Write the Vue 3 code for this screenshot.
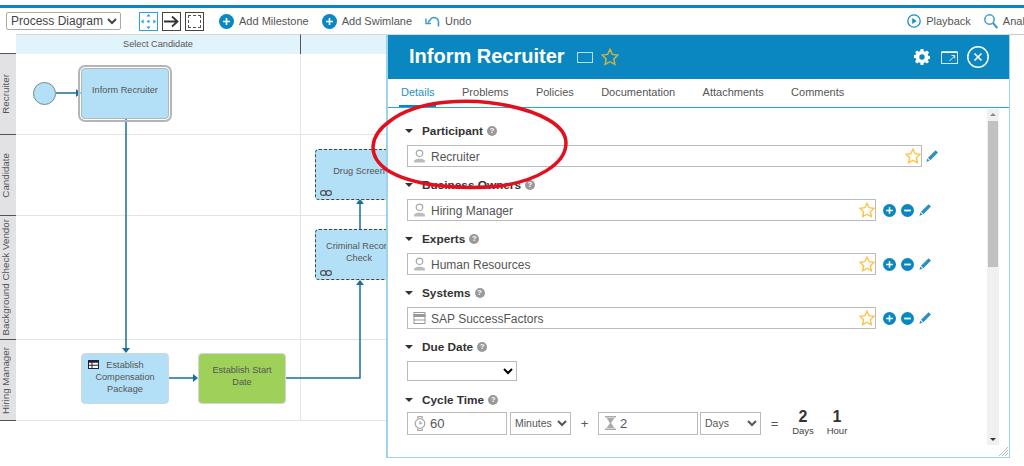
<script setup>
const lanes = [
  { name: 'Recruiter', h: 81 },
  { name: 'Candidate', h: 81 },
  { name: 'Background Check Vendor', h: 124 },
  { name: 'Hiring Manager', h: 81 },
]
const tabs = ['Details', 'Problems', 'Policies', 'Documentation', 'Attachments', 'Comments']
const people = [
  { label: 'Participant', value: 'Recruiter', icon: 'person', multi: false },
  { label: 'Business Owners', value: 'Hiring Manager', icon: 'person', multi: true },
  { label: 'Experts', value: 'Human Resources', icon: 'person', multi: true },
  { label: 'Systems', value: 'SAP SuccessFactors', icon: 'system', multi: true },
]
const starPath = 'M8 1.2l2.1 4.5 4.9.6-3.6 3.4.9 4.9L8 12.2l-4.3 2.4.9-4.9L1 6.3l4.9-.6z'
const penPath = 'M10.6 1.2l2.4 2.4-7.6 7.6-2.4-2.4zM2.4 9.6l2.2 2.2-3.2 1z'
</script>

<template>
  <div class="page">
    <div class="topline"></div>
    <div class="toolbar">
      <select class="view-select"><option>Process Diagram</option></select>
      <div class="modes">
        <span class="mode active">
          <svg width="15" height="15" viewBox="0 0 15 15" fill="#1a9bd2"><path d="M7.5 0l2 2.6h-4zM7.5 15l-2-2.6h4zM0 7.5l2.6-2v4zM15 7.5l-2.6 2v-4z"/><circle cx="7.5" cy="7.5" r="1.2"/></svg>
        </span>
        <span class="mode">
          <svg width="15" height="13" viewBox="0 0 15 13" fill="none" stroke="#333" stroke-width="1.8"><path d="M0 6.5h13M8 1.5l5.500 5-5.500 5"/></svg>
        </span>
        <span class="mode"><span class="dashed-box"></span></span>
      </div>
      <span class="tool first">
        <svg class="plus" width="15" height="15" viewBox="0 0 15 15"><circle cx="7.500" cy="7.500" r="7.500" fill="#0a87c0"/><path d="M7.500 4v7M4 7.500h7" stroke="#fff" stroke-width="1.600"/></svg>
        Add Milestone
      </span>
      <span class="tool">
        <svg class="plus" width="15" height="15" viewBox="0 0 15 15"><circle cx="7.500" cy="7.500" r="7.500" fill="#0a87c0"/><path d="M7.500 4v7M4 7.500h7" stroke="#fff" stroke-width="1.600"/></svg>
        Add Swimlane
      </span>
      <span class="tool">
        <svg width="15" height="12" viewBox="0 0 15 12" fill="none" stroke="#3d9bcb" stroke-width="1.600"><path d="M13.500 11.500V7a4.500 4.500 0 0 0-8.500-2L3 7.500"/><path d="M1 3.500v5h5" stroke-width="1.400"/></svg>
        Undo
      </span>
      <span class="spacer"></span>
      <span class="tool">
        <svg width="14" height="14" viewBox="0 0 14 14"><circle cx="7" cy="7" r="6.200" fill="none" stroke="#1a8fc4" stroke-width="1.300"/><path d="M5.200 4l4.600 3-4.600 3z" fill="#1a8fc4"/></svg>
        Playback
      </span>
      <span class="tool analyze">
        <svg width="14" height="15" viewBox="0 0 14 15" fill="none" stroke="#3d9bcb" stroke-width="1.500"><circle cx="5.500" cy="5.500" r="4.700"/><path d="M9 9l4.300 5" stroke-width="2"/></svg>
        Analyze
      </span>
    </div>

    <div class="diagram">
      <div class="lane-head">
        <div class="corner"></div>
        <div class="col-title first-col">Select Candidate</div>
        <div class="col-title">Background Check</div>
      </div>
      <div v-for="lane in lanes" :key="lane.name" class="lane" :style="{ height: lane.h + 'px' }">
        <div class="lane-label"><span>{{ lane.name }}</span></div>
        <div class="lane-cell first-col"></div>
        <div class="lane-cell"></div>
      </div>

      <svg class="wires" width="420" height="420" viewBox="0 0 420 420" fill="none" stroke="#1a6f97" stroke-width="1.500">
        <path d="M56 59H78"/>
        <path d="M126 85V316"/>
        <path d="M169 344H194"/>
        <path d="M286 344H360V250"/>
        <path d="M360 195V168"/>
        <g fill="#1a6f97" stroke="none">
          <path d="M81 59l-5-4v8z"/>
          <path d="M126 319l-4-5h8z"/>
          <path d="M198 344l-5-4v8z"/>
          <path d="M360 246l-4 5h8z"/>
          <path d="M360 165l-4 5h8z"/>
        </g>
      </svg>

      <div class="start"></div>
      <div class="node selected">Inform Recruiter</div>
      <div class="node comp">
        <svg class="table-ico" width="11" height="9" viewBox="0 0 11 9"><rect x=".5" y=".5" width="10" height="8" fill="#fff" stroke="#223"/><path d="M0 1h11v1.800H0zM3.500 1h1v8h-1zM0 4.800h11v1H0z" fill="#223"/></svg>
        Establish<br>Compensation<br>Package
      </div>
      <div class="node green">Establish Start<br>Date</div>
      <div class="node linked drug">Drug Screen
        <svg class="link-ico" width="12" height="6" viewBox="0 0 12 6" fill="none" stroke="#555" stroke-width="1.200"><rect x=".6" y=".6" width="5.500" height="4.800" rx="2.400"/><rect x="5.900" y=".6" width="5.500" height="4.800" rx="2.400"/></svg>
      </div>
      <div class="node linked crim">Criminal Record<br>Check
        <svg class="link-ico" width="12" height="6" viewBox="0 0 12 6" fill="none" stroke="#555" stroke-width="1.200"><rect x=".6" y=".6" width="5.500" height="4.800" rx="2.400"/><rect x="5.900" y=".6" width="5.500" height="4.800" rx="2.400"/></svg>
      </div>
    </div>

    <section class="panel">
      <header class="panel-head">
        <h1>Inform Recruiter</h1>
        <span class="rect-ico"></span>
        <svg width="18" height="18" viewBox="0 0 16 16" fill="none" stroke="#d6b13a" stroke-width="1.300"><path :d="starPath"/></svg>
        <span class="spacer"></span>
        <svg class="gear" width="16" height="16" viewBox="0 0 16 16"><path fill="#fff" fill-rule="evenodd" d="M6.600 0h2.800l.4 2.200 1.300.6L13 1.500l2 2-1.300 1.900.5 1.300 2.300.4v2.800l-2.300.4-.5 1.300L15 12.500l-2 2-1.900-1.300-1.300.6-.4 2.200H6.600l-.4-2.200-1.300-.6L3 14.500l-2-2 1.300-1.900-.5-1.300L0 8.900V6.100l1.800-.4.500-1.300L1 3.500l2-2 1.900 1.300 1.300-.6zM8 5.300a2.700 2.700 0 1 0 0 5.400 2.700 2.700 0 0 0 0-5.400z"/></svg>
        <svg class="pop" width="17" height="13" viewBox="0 0 17 13" fill="none" stroke="#fff"><rect x=".5" y="1" width="16" height="11.500" stroke="#cfe9f5"/><path d="M1 1.200h15" stroke-width="1.600"/><path d="M8.500 10l5-5M10.500 4.500h3.200v3" stroke-width=".9"/></svg>
        <svg class="close" width="22" height="22" viewBox="0 0 22 22" fill="none" stroke="#fff" stroke-width="1.500"><circle cx="11" cy="11" r="10.200"/><path d="M7.500 7.500l7 7M14.500 7.500l-7 7" stroke-width="1.700"/></svg>
      </header>
      <nav class="tabs">
        <a v-for="(tab, i) in tabs" :key="tab" :class="{ on: i === 0 }">{{ tab }}</a>
      </nav>
      <div class="panel-body">
        <div class="form">
          <div v-for="p in people" :key="p.label" class="section">
            <div class="sec-head">
              <i class="caret"></i><b>{{ p.label }}</b><i class="help">?</i>
            </div>
            <div class="field-row">
              <div class="field" :class="{ wide: !p.multi }">
                <svg v-if="p.icon === 'person'" width="13" height="14" viewBox="0 0 12 13" fill="none" stroke="#aaa" stroke-width="1.200"><circle cx="6" cy="4" r="3"/><path d="M1 12.500V10.500l3-1.500h4l3 1.500v2z" fill="#bbb" stroke="none"/></svg>
                <svg v-else width="13" height="12" viewBox="0 0 12 12" fill="none" stroke="#999"><rect x=".5" y=".5" width="11" height="11" fill="#fff"/><path d="M0 3.500h12" stroke-width="3"/><path d="M0 8h12"/></svg>
                <span class="val">{{ p.value }}</span>
                <svg class="star" width="16" height="16" viewBox="0 0 16 16" fill="#fff" stroke="#fcc24a" stroke-width="1.400"><path :d="starPath"/></svg>
              </div>
              <template v-if="p.multi">
                <svg class="act" width="13" height="13" viewBox="0 0 13 13"><circle cx="6.500" cy="6.500" r="6.500" fill="#0a87c0"/><path d="M6.500 3.200v6.600M3.200 6.500h6.600" stroke="#fff" stroke-width="1.500"/></svg>
                <svg class="act" width="13" height="13" viewBox="0 0 13 13"><circle cx="6.500" cy="6.500" r="6.500" fill="#0a87c0"/><path d="M3.200 6.500h6.600" stroke="#fff" stroke-width="1.800"/></svg>
              </template>
              <svg class="pen" width="14" height="14" viewBox="0 0 14 14" fill="#2a8fc7"><path :d="penPath"/></svg>
            </div>
          </div>

          <div class="section due">
            <div class="sec-head"><i class="caret"></i><b>Due Date</b><i class="help">?</i></div>
            <select class="due-select"><option></option></select>
          </div>

          <div class="section cycle">
            <div class="sec-head"><i class="caret"></i><b>Cycle Time</b><i class="help">?</i></div>
            <div class="cycle-row">
              <div class="num">
                <svg width="12" height="15" viewBox="0 0 12 15" fill="none" stroke="#aaa" stroke-width="1.300"><circle cx="6" cy="7.500" r="4.800"/><path d="M3.500 2.500l.5-2h4l.5 2M3.500 12.500l.5 2h4l.5-2M6 5v2.500h2"/></svg>
                <span>60</span>
              </div>
              <select class="unit u1"><option>Minutes</option></select>
              <span class="op plus-op">+</span>
              <div class="num">
                <svg width="11" height="14" viewBox="0 0 11 14" fill="#aaa"><path d="M0 0h11v1.500H0zM0 12.500h11V14H0zM1.500 2h8L6 7l3.500 5h-8L5 7z"/></svg>
                <span>2</span>
              </div>
              <select class="unit u2"><option>Days</option></select>
              <span class="op eq-op">=</span>
              <div class="total"><b>2</b><small>Days</small></div>
              <div class="total t2"><b>1</b><small>Hour</small></div>
            </div>
          </div>
        </div>
        <div class="scroll">
          <i class="arrow-up"></i>
          <div class="thumb"></div>
          <i class="arrow-down"></i>
        </div>
      </div>
      <svg class="grip" width="11" height="11" viewBox="0 0 11 11" stroke="#bbb" fill="none"><path d="M1 10L10 1M4 10l6-6M7 10l3-3"/></svg>
    </section>

    <div class="side-edge"></div>

    <svg class="ring" width="1024" height="466" viewBox="0 0 1024 466" fill="none" stroke="#e2101e" stroke-width="3.500">
      <path d="M510 106C470 97 417 100 390 121C369 136 367 156 387 170C412 186 460 190 500 186C535 181 566 165 566 143C566 125 540 112 505 105"/>
    </svg>
  </div>
</template>

<style>
html, body { margin: 0; background: #fff; }
</style>

<style scoped>
.page {
  position: relative;
  width: 1024px;
  height: 466px;
  overflow: hidden;
  background: #fff;
  font-family: "Liberation Sans", Arial, sans-serif;
  color: #555;
}
.topline {
  margin-top: 5px;
  height: 3px;
  background: #0a87c0;
}
.toolbar {
  display: flex;
  align-items: center;
  height: 26px;
  padding-left: 6px;
  font-size: 11px;
  color: #555;
}
.view-select {
  width: 115px;
  height: 18px;
  padding: 0;
  font: 12px "Liberation Sans", Arial, sans-serif;
  color: #444;
  background: #fff;
  border: 1px solid #aaa;
  border-radius: 2px;
}
.modes {
  display: flex;
  gap: 4px;
  margin-left: 18px;
}
.mode {
  display: flex;
  align-items: center;
  justify-content: center;
  width: 17px;
  height: 17px;
  border: 1px solid #444;
}
.mode.active { border-color: #29a3d9; }
.dashed-box {
  width: 11px;
  height: 11px;
  border: 1px dashed #555;
}
.tool {
  display: inline-flex;
  align-items: center;
  gap: 5px;
  margin-right: 13px;
  white-space: nowrap;
}
.tool.first { margin-left: 15px; }
.analyze { margin-right: -18px; }
.spacer { flex: 1; }

.diagram {
  position: relative;
  width: 1010px;
  font-size: 9.200px;
  color: #555;
}
.lane-head {
  display: flex;
  height: 20px;
}
.corner {
  width: 16px;
  flex: none;
  border-bottom: 1px solid #555;
  box-sizing: border-box;
}
.col-title {
  flex: 1;
  background: #e1f3fb;
  text-align: center;
  line-height: 18px;
  border-top: 1px solid #d8d8d8;
  box-sizing: border-box;
}
.col-title.first-col {
  flex: none;
  width: 285px;
  border-right: 1px solid #555;
}
.lane {
  display: flex;
  box-sizing: border-box;
  border-bottom: 1px solid #e4e4e4;
}
.lane-label {
  display: flex;
  align-items: center;
  justify-content: flex-start;
  flex: none;
  width: 16px;
  font-size: 9.800px;
  background: #e2e2e4;
  box-shadow: 0 1px 0 #555;
  overflow: hidden;
}
.lane-label span {
  writing-mode: vertical-rl;
  transform: rotate(180deg);
  white-space: nowrap;
  color: #555;
}
.lane-cell { flex: 1; }
.lane-cell.first-col {
  flex: none;
  width: 285px;
  border-right: 1.500px solid #e4e4e4;
  box-sizing: border-box;
}
.wires {
  position: absolute;
  left: 0;
  top: 0;
}
.start {
  position: absolute;
  left: 33px;
  top: 48px;
  box-sizing: border-box;
  width: 23px;
  height: 23px;
  border-radius: 50%;
  background: #b3e0f7;
  border: 1.500px solid #6f8a99;
}
.node {
  position: absolute;
  box-sizing: border-box;
  width: 88px;
  height: 51px;
  display: flex;
  align-items: center;
  justify-content: center;
  text-align: center;
  line-height: 12px;
  background: #b3e0f7;
  border: 1px solid #d0d8dc;
  border-radius: 4px;
  color: #555;
}
.selected {
  left: 81px;
  top: 34px;
  padding-bottom: 7px;
  outline: 2px solid #b5b5b5;
  outline-offset: 1px;
  border-color: #aeb8bd;
}
.comp { left: 81px; top: 319px; padding-bottom: 3px; }
.green { left: 198px; top: 319px; background: #9fd15a; padding-bottom: 5px; }
.linked {
  border: 1px dashed #444;
  left: 315px;
  padding-bottom: 7px;
}
.drug { top: 115px; height: 51px; }
.crim { top: 195px; height: 51px; padding-bottom: 6px; }
.table-ico { position: absolute; left: 6px; top: 6px; }
.link-ico { position: absolute; left: 4px; bottom: 3px; }

.panel {
  position: absolute;
  left: 386px;
  top: 35px;
  box-sizing: border-box;
  width: 624px;
  height: 423px;
  display: flex;
  flex-direction: column;
  background: #fff;
  border: 1px solid #9fd3ea;
  border-left-width: 2px;
  border-top: 0;
}
.panel-head {
  display: flex;
  align-items: center;
  height: 44px;
  flex: none;
  padding: 0 20px 0 21px;
  background: #0a87c0;
  color: #fff;
}
.panel-head h1 {
  margin: 0 12px 2px 0;
  font-size: 20px;
  font-weight: 700;
}
.rect-ico {
  width: 14px;
  height: 9px;
  margin-right: 8px;
  border: 1px solid #b9dfef;
}
.gear { margin-right: -1px; }
.pop { margin-left: 12px; margin-right: -1px; }
.close { margin-left: 10px; }
.tabs {
  display: flex;
  gap: 27.400px;
  height: 29px;
  flex: none;
  box-sizing: border-box;
  padding: 0 0 0 13px;
  border-bottom: 1px solid #2fa6d8;
  font-size: 11px;
  color: #555;
}
.tabs a {
  line-height: 26px;
  height: 28px;
  box-sizing: border-box;
}
.tabs a.on {
  margin: 0 -1px 0 -2px;
  padding: 0 1px 0 2px;
  color: #2a8fc7;
  border-bottom: 2px solid #0a87c0;
}
.panel-body {
  flex: 1;
  display: flex;
  min-height: 0;
}
.form {
  flex: 1;
  padding: 14px 0 0 19px;
  min-width: 0;
}
.section { height: 54px; }
.sec-head {
  display: flex;
  align-items: center;
  height: 18px;
  margin: 0 0 5px -6px;
  font-size: 11.800px;
  color: #333;
}
.caret {
  width: 0;
  height: 0;
  margin: 0 9px 0 4px;
  border-left: 4px solid transparent;
  border-right: 4px solid transparent;
  border-top: 4px solid #333;
}
.help {
  display: inline-block;
  width: 10px;
  height: 10px;
  margin-left: 4px;
  border-radius: 50%;
  background: #999;
  color: #fff;
  font: bold 8px/10px "Liberation Sans", Arial, sans-serif;
  text-align: center;
}
.field-row {
  display: flex;
  align-items: center;
}
.field {
  display: flex;
  align-items: center;
  box-sizing: border-box;
  width: 469px;
  height: 22px;
  padding: 0 0 0 5px;
  border: 1px solid #bbb;
  font-size: 12px;
  color: #555;
}
.field.wide { width: 515px; }
.val { flex: 1; margin-left: 5px; padding-top: 2px; }
.act { margin-left: 7px; }
.act + .act { margin-left: 5px; }
.pen { margin-left: 4px; }
.field.wide + .pen { margin-left: 3px; }
.due { height: 53px; }
.due-select {
  display: block;
  box-sizing: border-box;
  width: 110px;
  height: 20px;
  background: #fff;
  border: 1px solid #bbb;
  border-radius: 0;
}
.cycle .sec-head { margin-bottom: 2px; }
.cycle-row {
  display: flex;
  align-items: center;
  height: 24px;
  font-size: 13px;
}
.num {
  display: flex;
  align-items: center;
  gap: 4px;
  box-sizing: border-box;
  width: 100px;
  height: 23px;
  padding-left: 6px;
  border: 1px solid #bbb;
}
.unit {
  box-sizing: border-box;
  height: 23px;
  margin-left: 3px;
  padding: 0;
  font: 10.500px "Liberation Sans", Arial, sans-serif;
  color: #555;
  background: #fff;
  border: 1px solid #bbb;
  border-radius: 0;
}
.u1 { width: 61px; }
.u2 { width: 61px; }
.op {
  font-size: 13px;
  text-align: center;
}
.plus-op { width: 27px; }
.num + .u2 { margin-left: 2px; }
.eq-op { width: 27px; }
.total {
  display: flex;
  flex-direction: column;
  align-items: center;
  width: 28px;
  margin-left: 1px;
  color: #333;
}
.total.t2 { margin-left: 6px; }
.total b { font-size: 16px; line-height: 16px; }
.total small { font-size: 9.500px; line-height: 12px; color: #444; }
.scroll {
  position: relative;
  flex: none;
  width: 12px;
  margin: 1px 10px 12px 0;
  background: #f0f0f0;
}
.thumb {
  position: absolute;
  left: 1px;
  right: 1px;
  top: 12px;
  height: 146px;
  background: #c1c1c1;
}
.arrow-up, .arrow-down {
  position: absolute;
  left: 3px;
  width: 0;
  height: 0;
  border-left: 3px solid transparent;
  border-right: 3px solid transparent;
}
.arrow-up { top: 4px; border-bottom: 3px solid #888; }
.arrow-down { bottom: 4px; border-top: 3px solid #333; }
.grip { position: absolute; right: 0; bottom: 0; }
.side-edge {
  position: absolute;
  left: 1010px;
  top: 34px;
  width: 14px;
  height: 1px;
  background: #ccc;
}
.ring {
  position: absolute;
  left: 0;
  top: 0;
  pointer-events: none;
}
</style>
